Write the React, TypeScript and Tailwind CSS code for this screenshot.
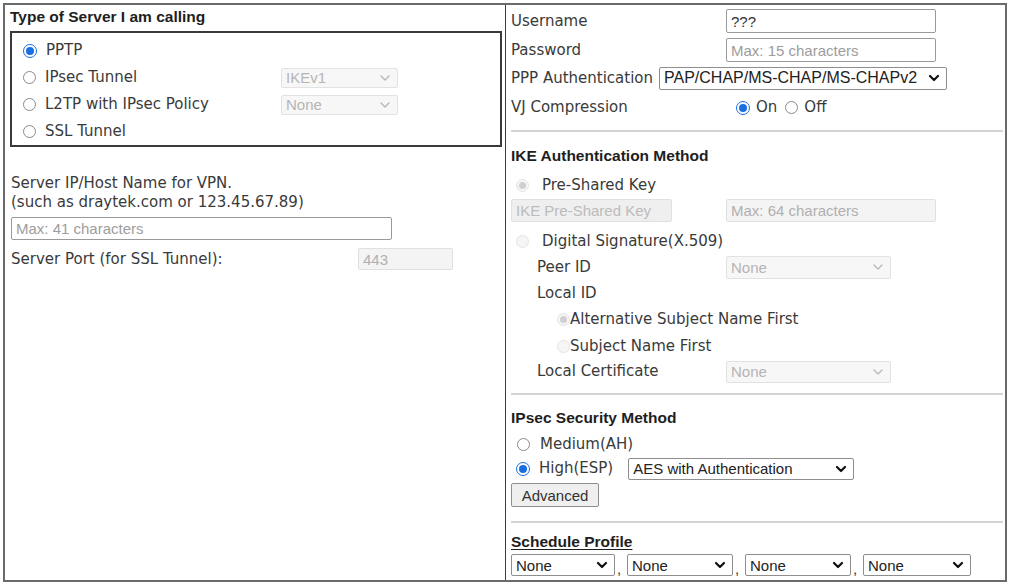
import React from "react";

const LABEL = "font-['DejaVu_Sans',sans-serif] text-[15px] text-[#3a3a3a] leading-none";
const BOLD = "font-['Liberation_Sans',Arial,sans-serif] font-bold text-[15.5px] text-[#1e1e1e] leading-none";
const ARIAL = "font-['Liberation_Sans',Arial,sans-serif] text-[15px] leading-none";

function Chevron({ disabled }: { disabled?: boolean }) {
  return (
    <svg width="12" height="8" viewBox="0 0 12 8" className="shrink-0">
      <path
        d="M2 2 L6 6 L10 2"
        fill="none"
        stroke={disabled ? "#b8b8b8" : "#111"}
        strokeWidth={disabled ? 1.4 : 2.2}
        strokeLinecap="round"
        strokeLinejoin="round"
      />
    </svg>
  );
}

function Select({
  text,
  w,
  h = "h-[21px]",
  disabled,
  extra = "",
}: {
  text: string;
  w: string;
  h?: string;
  disabled?: boolean;
  extra?: string;
}) {
  return (
    <div
      className={`${w} ${h} ${extra} flex items-center justify-between pl-[4px] pr-[6px] rounded-[2px] border ${
        disabled ? "border-[#e2e2e2] bg-[#f7f7f7] text-[#b5b5b5]" : "border-[#8e8e8e] bg-white text-[#222]"
      } ${ARIAL}`}
    >
      <span className="whitespace-nowrap">{text}</span>
      <Chevron disabled={disabled} />
    </div>
  );
}

function Input({
  text,
  w,
  placeholder,
  disabled,
  h = "h-[24px]",
}: {
  text: string;
  w: string;
  placeholder?: boolean;
  disabled?: boolean;
  h?: string;
}) {
  return (
    <div
      className={`${w} ${h} flex items-center px-[4px] rounded-[2px] border ${
        disabled ? "border-[#e0e0e0] bg-[#f4f4f4] text-[#b0b0b0]" : "border-[#9a9a9a] bg-white"
      } ${placeholder ? "text-[#9d9d9d]" : "text-[#333]"} ${ARIAL}`}
    >
      <span className="whitespace-nowrap">{text}</span>
    </div>
  );
}

function Radio({ checked, disabled }: { checked?: boolean; disabled?: boolean }) {
  if (disabled) {
    return (
      <div className="w-[13px] h-[13px] rounded-full border border-[#e3e3e3] bg-[#f6f6f6] flex items-center justify-center shrink-0">
        {checked && <div className="w-[7px] h-[7px] rounded-full bg-[#cfcfcf]" />}
      </div>
    );
  }
  if (checked) {
    return (
      <div className="w-[14px] h-[14px] rounded-full border-[1.5px] border-[#1a6fe0] bg-white flex items-center justify-center shrink-0">
        <div className="w-[8px] h-[8px] rounded-full bg-[#1a6fe0]" />
      </div>
    );
  }
  return <div className="w-[13px] h-[13px] rounded-full border border-[#8a8a8a] bg-white shrink-0" />;
}

function Hr() {
  return <div className="h-[2px] bg-[#d4d4d4] mr-[2px]" />;
}

function Comma() {
  return <span className="font-['Liberation_Sans',Arial,sans-serif] text-[15px] leading-none text-[#333] w-[12px] pl-[2px]">,</span>;
}

export default function App() {
  return (
    <div className="w-[1009px] h-[584px] bg-white pl-[3px] pt-[3px]">
      <div className="w-[1004px] h-[579px] border-2 border-[#6a6a6a] flex">
        {/* Left column */}
        <div className="w-[501px] h-full border-r border-[#3c3c3c] pl-[5px] pr-[3px]">
          <div className={`${BOLD} h-[16px] mt-[4px] flex items-center`}>Type of Server I am calling</div>
          <div className="mt-[6px] h-[116px] border-2 border-[#3a3a3a] pl-[11px] pt-[4px]">
            <div className="h-[27px] flex items-center">
              <Radio checked />
              <span className={`${LABEL} ml-[9px]`}>PPTP</span>
            </div>
            <div className="h-[27px] flex items-center">
              <Radio />
              <span className={`${LABEL} ml-[9px] w-[236px]`}>IPsec Tunnel</span>
              <Select text="IKEv1" w="w-[117px]" h="h-[20px]" disabled />
            </div>
            <div className="h-[27px] flex items-center">
              <Radio />
              <span className={`${LABEL} ml-[9px] w-[236px]`}>L2TP with IPsec Policy</span>
              <Select text="None" w="w-[117px]" h="h-[20px]" disabled />
            </div>
            <div className="h-[27px] flex items-center">
              <Radio />
              <span className={`${LABEL} ml-[9px]`}>SSL Tunnel</span>
            </div>
          </div>
          <div className="mt-[27px] pl-[1px]">
            <div className={`${LABEL} h-[19px] flex items-center`}>Server IP/Host Name for VPN.</div>
            <div className={`${LABEL} h-[19px] flex items-center`}>(such as draytek.com or 123.45.67.89)</div>
          </div>
          <div className="mt-[5px] pl-[1px]">
            <Input text="Max: 41 characters" w="w-[381px]" h="h-[23px]" placeholder />
          </div>
          <div className="mt-[7px] h-[24px] flex items-center pl-[1px]">
            <span className={`${LABEL} w-[347px]`}>Server Port (for SSL Tunnel):</span>
            <Input text="443" w="w-[95px]" h="h-[22px]" disabled />
          </div>
        </div>

        {/* Right column */}
        <div className="flex-1 h-full pl-[5px] flex flex-col">
          <div className="h-[24px] mt-[4px] flex items-center">
            <span className={`${LABEL} w-[215px]`}>Username</span>
            <Input text="???" w="w-[210px]" />
          </div>
          <div className="h-[24px] mt-[5px] flex items-center">
            <span className={`${LABEL} w-[215px]`}>Password</span>
            <Input text="Max: 15 characters" w="w-[210px]" placeholder />
          </div>
          <div className="h-[24px] mt-[4px] flex items-center">
            <span className={`${LABEL} w-[148px]`}>PPP Authentication</span>
            <Select text="PAP/CHAP/MS-CHAP/MS-CHAPv2" w="w-[288px]" h="h-[23px]" extra="text-[16px] pr-[4px]" />
          </div>
          <div className="h-[25px] mt-[5px] flex items-center">
            <span className={`${LABEL} w-[225px]`}>VJ Compression</span>
            <Radio checked />
            <span className={`${LABEL} ml-[6px]`}>On</span>
            <div className="ml-[8px]">
              <Radio />
            </div>
            <span className={`${LABEL} ml-[6px]`}>Off</span>
          </div>
          <div className="mt-[10px]">
            <Hr />
          </div>

          <div className={`${BOLD} h-[20px] mt-[14px] flex items-center`}>IKE Authentication Method</div>
          <div className="h-[24px] mt-[7px] flex items-center pl-[5px]">
            <Radio checked disabled />
            <span className={`${LABEL} ml-[13px]`}>Pre-Shared Key</span>
          </div>
          <div className="h-[23px] mt-[2px] flex items-center">
            <div className={`w-[161px] h-[23px] flex items-center px-[4px] rounded-[2px] border border-[#e0e0e0] bg-[#efefef] text-[#bcbcbc] ${ARIAL}`}>
              IKE Pre-Shared Key
            </div>
            <div className="ml-[54px]">
              <Input text="Max: 64 characters" w="w-[210px]" h="h-[23px]" disabled />
            </div>
          </div>
          <div className="h-[24px] mt-[7px] flex items-center pl-[5px]">
            <Radio disabled />
            <span className={`${LABEL} ml-[13px]`}>Digital Signature(X.509)</span>
          </div>
          <div className="h-[24px] mt-[2px] flex items-center pl-[26px]">
            <span className={`${LABEL} w-[189px]`}>Peer ID</span>
            <Select text="None" w="w-[165px]" h="h-[23px]" disabled />
          </div>
          <div className="h-[24px] mt-[2px] flex items-center pl-[26px]">
            <span className={LABEL}>Local ID</span>
          </div>
          <div className="h-[26px] mt-[1px] flex items-center pl-[46px]">
            <Radio checked disabled />
            <span className={LABEL}>Alternative Subject Name First</span>
          </div>
          <div className="h-[26px] mt-[1px] flex items-center pl-[46px]">
            <Radio disabled />
            <span className={LABEL}>Subject Name First</span>
          </div>
          <div className="h-[23px] mt-[1px] flex items-center pl-[26px]">
            <span className={`${LABEL} w-[189px]`}>Local Certificate</span>
            <Select text="None" w="w-[165px]" h="h-[22px]" disabled />
          </div>
          <div className="mt-[10px]">
            <Hr />
          </div>

          <div className={`${BOLD} h-[20px] mt-[13px] flex items-center`}>IPsec Security Method</div>
          <div className="h-[24px] mt-[4px] flex items-center pl-[6px]">
            <Radio />
            <span className={`${LABEL} ml-[10px]`}>Medium(AH)</span>
          </div>
          <div className="h-[23px] mt-[1px] flex items-center pl-[5px]">
            <Radio checked />
            <span className={`${LABEL} ml-[9px]`}>High(ESP)</span>
            <div className="ml-[15px]">
              <Select text="AES with Authentication" w="w-[226px]" h="h-[22px]" />
            </div>
          </div>
          <div className="mt-[3px]">
            <div className={`w-[88px] h-[24px] flex items-center justify-center rounded-[2px] border border-[#8f8f8f] bg-[#efefef] text-[#333] ${ARIAL}`}>
              Advanced
            </div>
          </div>
          <div className="mt-[14px]">
            <Hr />
          </div>
          <div className={`${BOLD} h-[20px] mt-[9px] flex items-center`}>
            <span className="underline decoration-[1px] underline-offset-[2px]">Schedule Profile</span>
          </div>
          <div className="h-[22px] mt-[2px] flex items-end">
            <Select text="None" w="w-[104px]" h="h-[22px]" />
            <Comma />
            <Select text="None" w="w-[106px]" h="h-[22px]" />
            <Comma />
            <Select text="None" w="w-[106px]" h="h-[22px]" />
            <Comma />
            <Select text="None" w="w-[108px]" h="h-[22px]" />
          </div>
        </div>
      </div>
    </div>
  );
}
